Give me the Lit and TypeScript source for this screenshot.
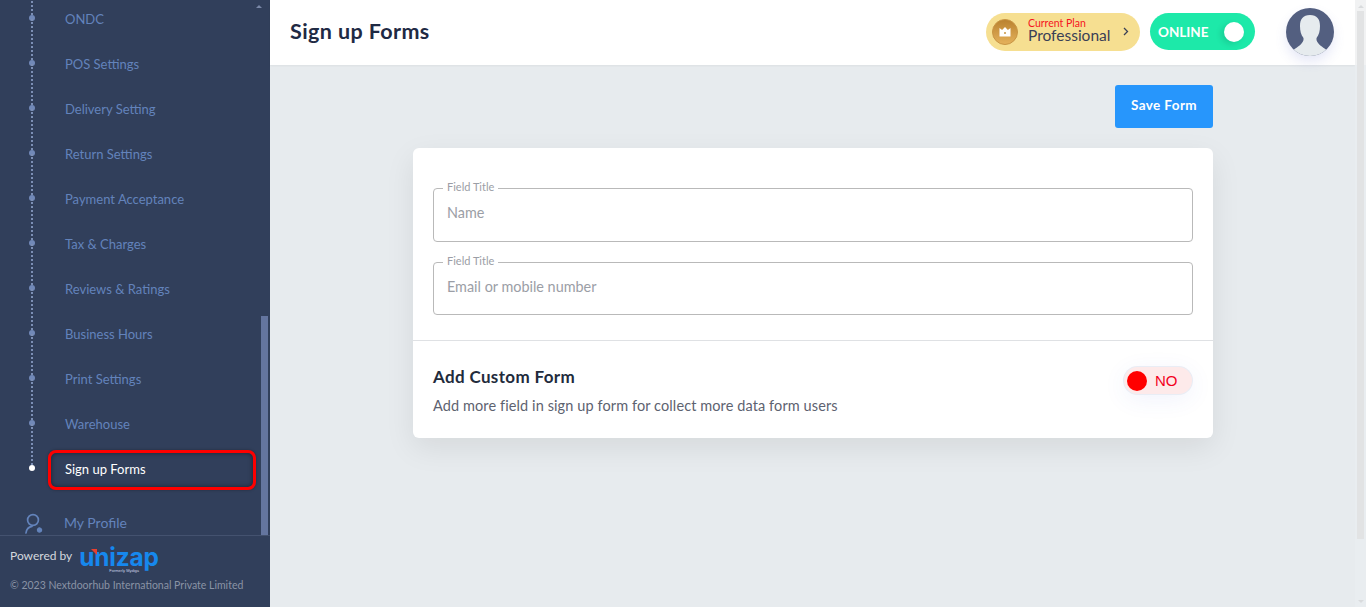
import { LitElement, html, css } from "lit";
import { customElement } from "lit/decorators.js";

const items = ["ONDC","POS Settings","Delivery Setting","Return Settings","Payment Acceptance","Tax & Charges","Reviews & Ratings","Business Hours","Print Settings","Warehouse"];

@customElement("app-root")
export class AppRoot extends LitElement {
  static styles = css`
    :host { display:flex; width:1366px; height:607px; overflow:hidden; font-family:"Lato","Open Sans",sans-serif; background:#e7ebee; color:#1f2a44; }
    .side { width:270px; flex:none; background:#313f5b; display:flex; flex-direction:column; height:607px; }
    .menuwrap { height:536px; flex:none; position:relative; overflow:hidden; display:flex; flex-direction:column; justify-content:flex-end; border-bottom:1px solid #44526f; box-sizing:border-box; }
    .thumb { position:absolute; right:2px; top:316px; bottom:0; width:7px; background:#64759f; }
    .up { position:absolute; right:8px; top:5px; width:0; height:0; border:3px solid transparent; border-top:0; border-bottom:3px solid #7a88a8; }
    .item { height:45px; flex:none; display:flex; align-items:center; padding-left:65px; font-size:13px; color:#6383bb; position:relative; }
    .item::before { content:""; position:absolute; left:31px; top:-22px; height:45px; border-left:2px dotted #7c8fb5; }
    .item::after { content:""; position:absolute; left:29px; top:19px; width:6px; height:6px; border-radius:50%; background:#7189b8; }
    .item.active { color:#fff; }
    .item.active::after { background:#fff; }
    .hl { position:absolute; left:48px; top:4px; width:208px; height:40px; box-sizing:border-box; border:3.5px solid #f00; border-radius:8px; box-shadow:0 0 5px rgba(0,0,0,.45) inset, 0 0 3px rgba(0,0,0,.3); }
    .active span { position:relative; }
    .profile { height:43px; flex:none; display:flex; align-items:center; gap:15px; padding-left:23px; font-size:14px; color:#6383bb; margin-top:10px; margin-bottom:-9px; }
    .foot { padding:6px 10px 0; }
    .pw { display:flex; align-items:center; gap:7px; font-size:12px; color:#d5d8de; height:26px; }
    .logo { position:relative; margin-top:4px; color:#1688ee; font:700 24.4px/18px "Inter","Liberation Sans",sans-serif; letter-spacing:-.2px; display:block; height:18px; }
    .logo small { position:absolute; left:30px; top:20px; font:400 4px/5px "Liberation Sans",sans-serif; color:#c9d3e6; letter-spacing:0; white-space:nowrap; }
    .logo i { position:absolute; left:12px; top:1px; width:0; height:0; border-top:6px solid #e8402f; border-left:6px solid transparent; }
    .copy { font-size:10.5px; color:#8a93a5; margin-top:11px; white-space:nowrap; }
    .main { flex:1; display:flex; flex-direction:column; min-width:0; position:relative; }
    .top { height:65px; flex:none; background:#fff; display:flex; align-items:center; padding:0 0 2px 20px; margin-right:11px; box-shadow:0 1px 2px rgba(0,0,0,.05); box-sizing:border-box; }
    .top h1 { font-size:21.5px; letter-spacing:.4px; font-weight:700; margin:0 0 2px; color:#1f2a44; flex:1; }
    .sb { position:absolute; right:0; top:0; bottom:0; width:11px; background:linear-gradient(#f1f2f3 0 65px, #e9edf0 65px); }
    .sb::before { content:""; position:absolute; left:3px; top:5px; width:0; height:0; border:3px solid transparent; border-top:0; border-bottom:3px solid #d9dbdd; }
    .sb::after { content:""; position:absolute; left:3px; bottom:4px; width:0; height:0; border:3px solid transparent; border-bottom:0; border-top:3px solid #d9dbdd; }
    .sb i { position:absolute; left:2px; top:11px; width:7px; height:528px; background:#e2e3e4; }
    .plan { width:154px; height:38px; box-sizing:border-box; border-radius:19px; background:#f6df91; display:flex; align-items:center; padding-left:6px; margin-right:10px; }
    .coin { width:26px; height:26px; flex:none; }
    .ptext { margin-left:10px; padding-bottom:3px; display:flex; flex-direction:column; flex:1; }
    .ptext b { font-weight:400; font-size:10.5px; color:#f5141e; line-height:10px; }
    .ptext span { font-size:15.5px; color:#3a4056; line-height:14px; }
    .chev { margin-right:11px; flex:none; }
    .online { width:105px; height:37px; box-sizing:border-box; border-radius:19px; background:#1de9a9; display:flex; align-items:center; justify-content:space-between; padding:0 11px 0 8px; color:#fff; font-weight:700; font-size:13.5px; }
    .online i { width:20px; height:20px; border-radius:50%; background:#fff; box-shadow:-3px 2px 6px rgba(0,0,0,.12); }
    .ava { width:48px; height:48px; margin:0 21px 0 31px; border-radius:50%; flex:none; box-shadow:0 6px 12px rgba(90,100,200,.15); overflow:hidden; }
    .ava svg { display:block; }
    .body { flex:1; display:flex; flex-direction:column; align-items:center; padding-top:20px; margin-right:11px; }
    .col { width:800px; margin-left:1px; display:flex; flex-direction:column; }
    .save { align-self:flex-end; width:98px; height:43px; border:0; border-radius:3px; background:#2796fc; color:#fff; font:700 13.5px "Lato",sans-serif; letter-spacing:.4px; padding:0 0 3px; }
    .card { margin-top:20px; height:290px; background:#fff; border-radius:6px; box-shadow:0 10px 30px rgba(0,0,0,.08); display:flex; flex-direction:column; }
    .fields { padding:40px 20px 0; height:193px; box-sizing:border-box; border-bottom:1px solid #dfe1e4; display:flex; flex-direction:column; gap:20px; }
    .field { height:54px; box-sizing:border-box; border:1px solid #b9b9b9; border-radius:4px; position:relative; display:flex; align-items:center; padding:0 13px 5px; font-size:14.4px; color:#9b9ea6; }
    .field:nth-child(2) { height:53px; }
    .field label { position:absolute; left:9px; top:-9px; padding:0 4px; background:#fff; font-size:11px; line-height:13px; color:#9b9ea6; }
    .custom { flex:1; display:flex; justify-content:space-between; padding:26px 20px 0 20px; box-sizing:border-box; }
    .custom h3 { margin:0; font-size:17px; letter-spacing:.35px; font-weight:700; line-height:20px; color:#222b3c; }
    .custom p { margin:10px 0 0; font-size:14.5px; letter-spacing:.1px; line-height:18px; color:#5d6270; }
    .toggle { width:68px; height:27px; margin-right:1px; box-sizing:border-box; border-radius:14px; background:#fdeaea; box-shadow:0 0 0 1px #e9edf5, 0 5px 24px rgba(70,90,220,.08); display:flex; align-items:center; padding-left:3px; gap:8px; color:#f3001e; font:400 15px "Liberation Sans",sans-serif; }
    .toggle i { width:20px; height:20px; border-radius:50%; background:#f00; }
  `;
  render() {
    return html`
      <aside class="side">
        <div class="menuwrap">
          ${items.map(t => html`<div class="item"><span>${t}</span></div>`)}
          <div class="item active"><div class="hl"></div><span>Sign up Forms</span></div>
          <div class="profile">
            <svg width="26" height="26" viewBox="0 0 26 26" fill="none" stroke="#6383bb" stroke-width="1.7" stroke-linecap="round"><circle cx="10" cy="10" r="5.4"/><path d="M3 23c.4-3.500 2.600-6 6-6.600"/><circle cx="16.500" cy="20" r="2" fill="#6383bb" stroke-width="1.400" stroke-dasharray="1.200 .6"/></svg>
            <span>My Profile</span>
          </div>
          <div class="thumb"></div><div class="up"></div>
        </div>
        <div class="foot">
          <div class="pw"><span>Powered by</span><span class="logo">unizap<i></i><small>Formerly Mydiga</small></span></div>
          <div class="copy">© 2023 Nextdoorhub International Private Limited</div>
        </div>
      </aside>
      <main class="main">
        <div class="sb"><i></i></div>
        <header class="top">
          <h1>Sign up Forms</h1>
          <div class="plan">
            <svg class="coin" viewBox="0 0 26 26"><defs><linearGradient id="g" x1="0" y1="0" x2="0" y2="1"><stop offset="0" stop-color="#b9812f"/><stop offset="1" stop-color="#e5b25c"/></linearGradient></defs><circle cx="13" cy="13" r="12.500" fill="url(#g)" stroke="#c89443"/><path d="M7.500 9l2.600 2 2.900-3 2.900 3 2.600-2v8.500h-11z" fill="#fff"/><circle cx="13" cy="14" r="1" fill="#c89443"/></svg>
            <div class="ptext"><b>Current Plan</b><span>Professional</span></div>
            <svg class="chev" width="6" height="9" viewBox="0 0 6 9" fill="none" stroke="#3a4056" stroke-width="1.300"><path d="M1 1l3.500 3.500L1 8"/></svg>
          </div>
          <div class="online"><span>ONLINE</span><i></i></div>
          <div class="ava">
            <svg width="48" height="48" viewBox="0 0 48 48"><rect width="48" height="48" fill="#535f80"/><path d="M24 7c7 0 10 4 10 11 0 5-1 9-3.500 12v2c1 4 6 7 10 10v6H7.500v-6c4-3 9-6 10-10v-2c-2.500-3-3.500-7-3.500-12 0-7 3-11 10-11z" fill="#e6ebee"/></svg>
          </div>
        </header>
        <section class="body">
          <div class="col">
            <button class="save">Save Form</button>
            <div class="card">
              <div class="fields">
                <div class="field"><label>Field Title</label>Name</div>
                <div class="field"><label>Field Title</label>Email or mobile number</div>
              </div>
              <div class="custom">
                <div><h3>Add Custom Form</h3><p>Add more field in sign up form for collect more data form users</p></div>
                <div class="toggle"><i></i><span>NO</span></div>
              </div>
            </div>
          </div>
        </section>
      </main>`;
  }
}
